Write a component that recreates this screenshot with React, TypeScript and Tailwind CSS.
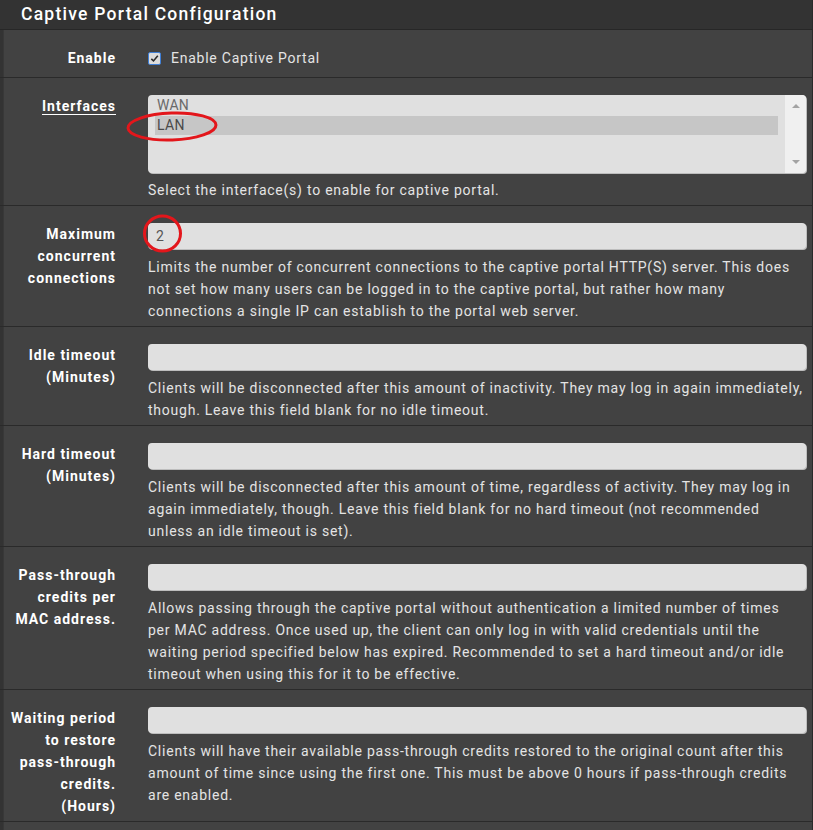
import React from "react"

type Row = {
  label: string[]
  value?: string
  help: string
}

const rows: Row[] = [
  {
    label: ["Maximum", "concurrent", "connections"],
    value: "2",
    help: "Limits the number of concurrent connections to the captive portal HTTP(S) server. This does not set how many users can be logged in to the captive portal, but rather how many connections a single IP can establish to the portal web server.",
  },
  {
    label: ["Idle timeout", "(Minutes)"],
    help: "Clients will be disconnected after this amount of inactivity. They may log in again immediately, though. Leave this field blank for no idle timeout.",
  },
  {
    label: ["Hard timeout", "(Minutes)"],
    help: "Clients will be disconnected after this amount of time, regardless of activity. They may log in again immediately, though. Leave this field blank for no hard timeout (not recommended unless an idle timeout is set).",
  },
  {
    label: ["Pass-through", "credits per", "MAC address."],
    help: "Allows passing through the captive portal without authentication a limited number of times per MAC address. Once used up, the client can only log in with valid credentials until the waiting period specified below has expired. Recommended to set a hard timeout and/or idle timeout when using this for it to be effective.",
  },
  {
    label: ["Waiting period", "to restore", "pass-through", "credits.", "(Hours)"],
    help: "Clients will have their available pass-through credits restored to the original count after this amount of time since using the first one. This must be above 0 hours if pass-through credits are enabled.",
  },
]

function Label({ lines, underline }: { lines: string[]; underline?: boolean }) {
  return (
    <div className="w-[115px] shrink-0 text-right font-bold text-white text-[14px] leading-[22px] tracking-[1px]">
      {lines.map((l) => (
        <div key={l} className="mr-[-1px]">
          <span className={underline ? "border-b border-white" : ""}>{l}</span>
        </div>
      ))}
    </div>
  )
}

export default function App() {
  return (
    <div
      className="relative w-[813px] h-[830px] overflow-hidden bg-[#333333] text-[14px] tracking-[0.76px]"
      style={{ fontFamily: "Roboto, 'Liberation Sans', sans-serif" }}
    >
      {/* panel heading */}
      <div className="h-[30px] border-b border-[#272727] border-r border-r-[#2a2a2a] pl-[21px] flex items-center">
        <h2 className="text-white text-[17.5px] font-medium tracking-[1.25px]">Captive Portal Configuration</h2>
      </div>

      <div className="ml-[3px] border-l border-[#383838] border-r border-r-[#2a2a2a] bg-[#424242]">
        {/* Enable */}
        <div className="flex gap-[33px] pt-[17px] pb-[8px] border-b border-[#2a2a2a]" style={{ marginLeft: -4 }}>
          <Label lines={["Enable"]} />
          <label className="flex items-center gap-[10px] text-[#e4e4e4] leading-[22px]">
            <span className="w-[13px] h-[13px] rounded-[2px] border border-[#3f7fd6] bg-[#dcdcdc] flex items-center justify-center">
              <svg width="9" height="9" viewBox="0 0 9 9">
                <path d="M1.3 4.8 L3.5 6.9 L7.8 1.8" fill="none" stroke="#2b2b2b" strokeWidth="1.6" />
              </svg>
            </span>
            Enable Captive Portal
          </label>
        </div>

        {/* Interfaces */}
        <div className="flex gap-[33px] pt-[17px] pb-[4px] border-b border-[#2a2a2a]" style={{ marginLeft: -4 }}>
          <Label lines={["Interfaces"]} underline />
          <div className="flex-1 mr-[6px]">
            <div className="h-[78px] rounded-[4px] bg-[#e0e0e0] flex overflow-hidden shadow-[1px_1px_0_#bdbdbd]">
              <div className="flex-1 pl-[7px] pr-[7px] pt-[1px] text-[14px] leading-[19.5px] tracking-[0.3px]">
                <div className="pl-[2px] text-[#6a6a6a]">WAN</div>
                <div className="pl-[2px] bg-[#c6c6c6] text-[#4a4a4a]">LAN</div>
              </div>
              <div className="w-[21px] bg-[#f0f0f0] flex flex-col items-center justify-between py-[9px]">
                <span className="w-0 h-0 border-l-[4px] border-r-[4px] border-b-[4px] border-l-transparent border-r-transparent border-b-[#a3a3a3]" />
                <span className="w-0 h-0 border-l-[4px] border-r-[4px] border-t-[4px] border-l-transparent border-r-transparent border-t-[#a3a3a3]" />
              </div>
            </div>
            <p className="mt-[6px] text-[#e4e4e4] leading-[22px]">Select the interface(s) to enable for captive portal.</p>
          </div>
        </div>

        {rows.map((r, i) => (
          <div
            key={i}
            className="flex gap-[33px] pt-[17px] pb-[4px] border-b border-[#2a2a2a]"
            style={{ marginLeft: -4 }}
          >
            <Label lines={r.label} />
            <div className="flex-1 mr-[6px]">
              <div className="h-[26px] rounded-[4px] bg-[#e0e0e0] px-[8px] flex items-center text-[#555] shadow-[1px_1px_0_#bdbdbd]">
                {r.value}
              </div>
              <p className="mt-[7px] pr-[2px] text-[#e4e4e4] leading-[22px]">{r.help}</p>
            </div>
          </div>
        ))}
        <div className="h-[20px]" />
      </div>

      {/* red annotation marks */}
      <svg className="absolute left-0 top-0 pointer-events-none" width="813" height="830">
        <ellipse cx="172" cy="126.5" rx="44" ry="13.5" fill="none" stroke="#e3161b" strokeWidth="3" transform="rotate(-2 172 126.5)" />
        <ellipse cx="162.5" cy="233.5" rx="18" ry="17.5" fill="none" stroke="#e3161b" strokeWidth="3" />
      </svg>
    </div>
  )
}
